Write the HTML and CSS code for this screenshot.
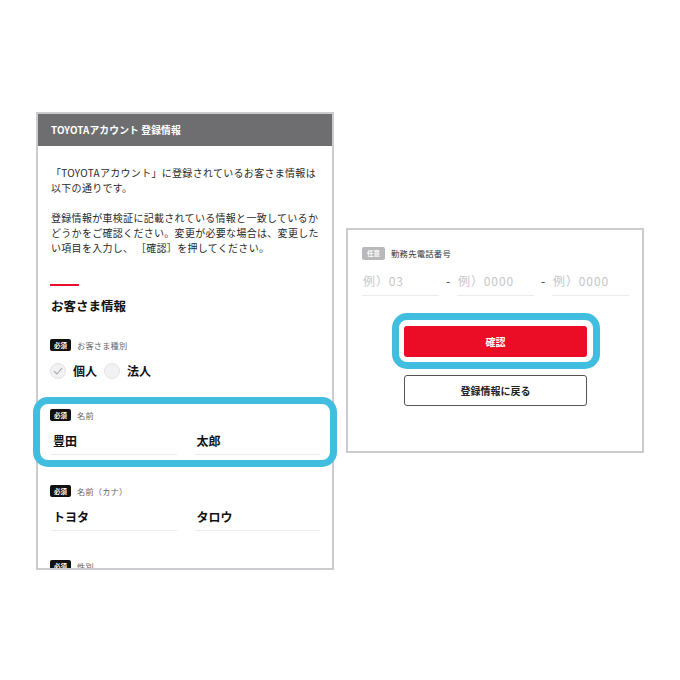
FILE: index.html
```html
<!DOCTYPE html>
<html lang="ja">
<head>
<meta charset="UTF-8">
<meta name="viewport" content="width=device-width, initial-scale=1.0">
<title>TOYOTAアカウント 登録情報</title>
<link rel="stylesheet" href="styles.css">
</head>
<body>

<div class="stage">

    <div class="shot">
        <div class="panel panel-left">
            <div class="panel-header">TOYOTAアカウント 登録情報</div>
            <div class="panel-body">
                <p class="intro">「TOYOTAアカウント」に登録されているお客さま情報は<br>以下の通りです。</p>
                <p class="intro">登録情報が車検証に記載されている情報と一致しているか<br>どうかをご確認ください。変更が必要な場合は、変更した<br>い項目を入力し、 ［確認］を押してください。</p>

                <div class="section-line"></div>
                <h2 class="section-title">お客さま情報</h2>

                <div class="field field-first">
                    <div class="field-head"><span class="badge">必須</span><span class="field-label">お客さま種別</span></div>
                    <div class="radios">
                        <label class="radio">
                            <span class="radio-dot">
                                <svg width="16" height="16" viewBox="0 0 16 16"><path d="M4.2 8.3 L7 11 L11.8 5.4" fill="none" stroke="#a9a9ad" stroke-width="1.1" stroke-linecap="round" stroke-linejoin="round"/></svg>
                            </span>個人
                        </label>
                        <label class="radio"><span class="radio-dot"></span>法人</label>
                    </div>
                </div>

                <div class="field">
                    <div class="field-head"><span class="badge">必須</span><span class="field-label">名前</span></div>
                    <div class="inputs">
                        <div class="input">豊田</div>
                        <div class="input">太郎</div>
                    </div>
                </div>

                <div class="field">
                    <div class="field-head"><span class="badge">必須</span><span class="field-label">名前（カナ）</span></div>
                    <div class="inputs">
                        <div class="input">トヨタ</div>
                        <div class="input">タロウ</div>
                    </div>
                </div>

                <div class="field field-last">
                    <div class="field-head"><span class="badge">必須</span><span class="field-label">性別</span></div>
                </div>
            </div>
        </div>
        <div class="ring ring-name"></div>
    </div>

    <div class="panel panel-right">
        <div class="field-head"><span class="badge badge-optional">任意</span><span class="field-label dark">勤務先電話番号</span></div>
        <div class="tel-row">
            <div class="tel-input">例）03</div>
            <span class="tel-sep">-</span>
            <div class="tel-input">例）0000</div>
            <span class="tel-sep">-</span>
            <div class="tel-input">例）0000</div>
        </div>
        <div class="actions">
            <div class="confirm-wrap">
                <button class="btn btn-confirm">確認</button>
                <div class="ring ring-btn"></div>
            </div>
            <button class="btn btn-back">登録情報に戻る</button>
        </div>
    </div>

</div>

</body>
</html>
```

FILE: styles.css
```css
body {
    margin: 0;
    padding: 0;
    background: #fff;
    color: #222;
    font-family: "Noto Sans CJK JP", "Noto Sans", sans-serif;
}

.stage {
    display: flex;
    align-items: flex-start;
    gap: 12px;
    padding: 112px 0 0 36px;
}

.shot {
    position: relative;
}

.panel {
    width: 294px;
    border: 2px solid #cbcbd0;
    background: #fff;
}

.panel-left {
    height: 454px;
    overflow: hidden;
}

.panel-header {
    background: #6e6e70;
    color: #fff;
    height: 32px;
    line-height: 32px;
    padding-left: 13px;
    font-size: 9.8px;
    font-weight: bold;
    letter-spacing: 0.1px;
}

.panel-body {
    padding: 19px 12px 0 13px;
}

.intro {
    margin: 0 0 15px;
    font-size: 10px;
    line-height: 15px;
    letter-spacing: 0.3px;
    color: #2a2a2a;
    white-space: nowrap;
}

.section-line {
    width: 29px;
    height: 2px;
    background: #e8102a;
    margin-top: 29px;
    margin-left: -1px;
}

.section-title {
    margin: 11px 0 0;
    font-size: 12.5px;
    line-height: 18px;
    font-weight: bold;
    color: #111;
}

.field {
    margin-top: 30px;
}

.field-first {
    margin-top: 24px;
}

/* the list goes on below the fold, the shot cuts it in half */
.field-last {
    margin-top: 29px;
}

.field-head {
    display: flex;
    align-items: center;
    gap: 6px;
    height: 12px;
}

.badge {
    display: inline-block;
    background: #111;
    color: #fff;
    font-size: 6.5px;
    font-weight: bold;
    line-height: 12px;
    height: 12px;
    padding: 0 4px;
    border-radius: 2px;
    margin-left: -1px;
}

.badge-optional {
    background: #b9b9bb;
    height: 13px;
    line-height: 13px;
    padding: 0 5px;
    margin-left: 0;
}

.field-label {
    font-size: 8.2px;
    color: #666;
    letter-spacing: 0.2px;
}

.field-label.dark {
    color: #333;
    font-size: 8.4px;
}

.radios {
    display: flex;
    gap: 8px;
    margin-top: 12px;
}

.radio {
    display: flex;
    align-items: center;
    gap: 7px;
    font-size: 12px;
    font-weight: bold;
    line-height: 16px;
    color: #111;
}

.radio-dot {
    width: 16px;
    height: 16px;
    box-sizing: border-box;
    border-radius: 50%;
    background: #f2f2f5;
    border: 1px solid #e2e2e6;
    margin-left: -1px;
    display: flex;
}

.radio-dot svg {
    margin: -1px;
}

.inputs {
    display: flex;
    gap: 18px;
    margin-top: 11px;
}

.input {
    flex: 1;
    font-size: 12px;
    font-weight: bold;
    line-height: 18px;
    padding: 0 0 4px 2px;
    border-bottom: 1px solid #ececee;
    color: #111;
}

.ring {
    position: absolute;
    border: 7px solid #41bde0;
    border-radius: 15px;
    pointer-events: none;
}

.ring-name {
    left: -3px;
    top: 285px;
    width: 290px;
    height: 56px;
}

/* right panel */
.panel-right {
    margin-top: 116px;
    height: 193px;
    padding: 17px 13px 11px 14px;
    width: 267px;
}

.tel-row {
    display: flex;
    align-items: flex-start;
    margin-top: 13px;
}

.tel-input {
    width: 77px;
    font-size: 12px;
    line-height: 18px;
    color: #c6c6c9;
    letter-spacing: 0.9px;
    padding: 0 0 5px 1px;
    border-bottom: 1px solid #ececee;
    box-sizing: border-box;
}

.tel-sep {
    width: 18px;
    text-align: center;
    font-size: 12px;
    line-height: 18px;
    color: #333;
}

.actions {
    display: flex;
    flex-direction: column;
    align-items: center;
    gap: 18px;
    margin-top: 30px;
}

.confirm-wrap {
    position: relative;
}

.btn {
    display: block;
    width: 183px;
    height: 31px;
    border-radius: 3px;
    font-family: "Noto Sans CJK JP", "Noto Sans", sans-serif;
    font-size: 10px;
    font-weight: bold;
    cursor: pointer;
}

.btn-confirm {
    background: #eb0c25;
    border: none;
    color: #fff;
}

.btn-back {
    background: #fff;
    border: 1px solid #555;
    color: #222;
}

.ring-btn {
    left: -12px;
    top: -13px;
    right: -13px;
    bottom: -12px;
}
```
